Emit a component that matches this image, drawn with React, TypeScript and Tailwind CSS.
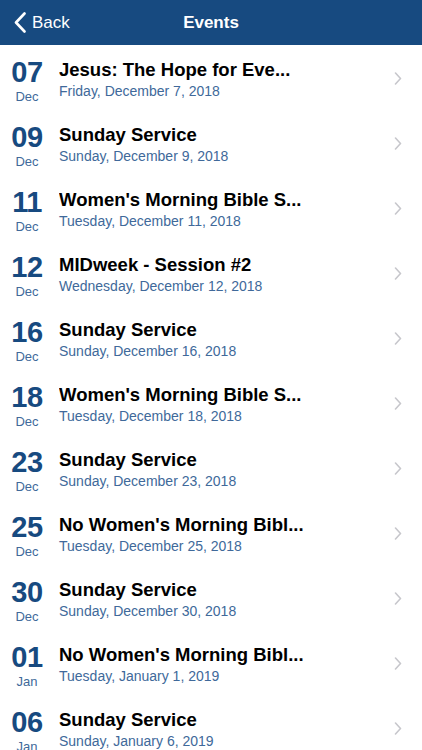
import React from "react";

const events = [
  { d: "07", m: "Dec", t: "Jesus: The Hope for Eve...", s: "Friday, December 7, 2018" },
  { d: "09", m: "Dec", t: "Sunday Service", s: "Sunday, December 9, 2018" },
  { d: "11", m: "Dec", t: "Women's Morning Bible S...", s: "Tuesday, December 11, 2018" },
  { d: "12", m: "Dec", t: "MIDweek - Session #2", s: "Wednesday, December 12, 2018" },
  { d: "16", m: "Dec", t: "Sunday Service", s: "Sunday, December 16, 2018" },
  { d: "18", m: "Dec", t: "Women's Morning Bible S...", s: "Tuesday, December 18, 2018" },
  { d: "23", m: "Dec", t: "Sunday Service", s: "Sunday, December 23, 2018" },
  { d: "25", m: "Dec", t: "No Women's Morning Bibl...", s: "Tuesday, December 25, 2018" },
  { d: "30", m: "Dec", t: "Sunday Service", s: "Sunday, December 30, 2018" },
  { d: "01", m: "Jan", t: "No Women's Morning Bibl...", s: "Tuesday, January 1, 2019" },
  { d: "06", m: "Jan", t: "Sunday Service", s: "Sunday, January 6, 2019" },
];

export default function App() {
  return (
    <div
      className="w-[422px] h-[750px] overflow-hidden bg-white"
      style={{ fontFamily: '"Liberation Sans", Arial, sans-serif' }}
    >
      <div className="relative h-[45px] bg-[#174a80] flex items-center justify-center">
        <div className="absolute left-[14px] top-0 h-[45px] flex items-center gap-[6px] text-white">
          <svg width="12" height="21" viewBox="0 0 12 21" fill="none">
            <path d="M10.5 1.5 L2 10.5 L10.5 19.5" stroke="white" strokeWidth="2.6" strokeLinecap="round" strokeLinejoin="round" />
          </svg>
          <span className="text-[17px] leading-none">Back</span>
        </div>
        <span className="text-white text-[17px] font-bold leading-none">Events</span>
      </div>
      <div className="flex flex-col">
        {events.map((e, i) => (
          <div key={i} className="h-[65px] flex items-start shrink-0">
            <div className="w-[54px] flex flex-col items-center pt-[15px]">
              <span className="text-[29px] font-bold leading-[25px] text-[#174a80] tracking-[-0.5px]">{e.d}</span>
              <span className="text-[13px] leading-[16px] mt-[4px] text-[#40699a]">{e.m}</span>
            </div>
            <div className="flex-1 flex flex-col pt-[14px] pl-[5px] min-w-0">
              <span className="text-[18.5px] font-bold leading-[22px] text-black truncate">{e.t}</span>
              <span className="text-[14px] leading-[18px] mt-[1px] text-[#40699a]">{e.s}</span>
            </div>
            <div className="w-[40px] h-full flex items-center justify-center pt-[2px] pr-[8px]">
              <svg width="8" height="13" viewBox="0 0 8 13" fill="none">
                <path d="M1.5 1 L6.5 6.5 L1.5 12" stroke="#c7c7cc" strokeWidth="1.6" strokeLinecap="round" strokeLinejoin="round" />
              </svg>
            </div>
          </div>
        ))}
      </div>
    </div>
  );
}
